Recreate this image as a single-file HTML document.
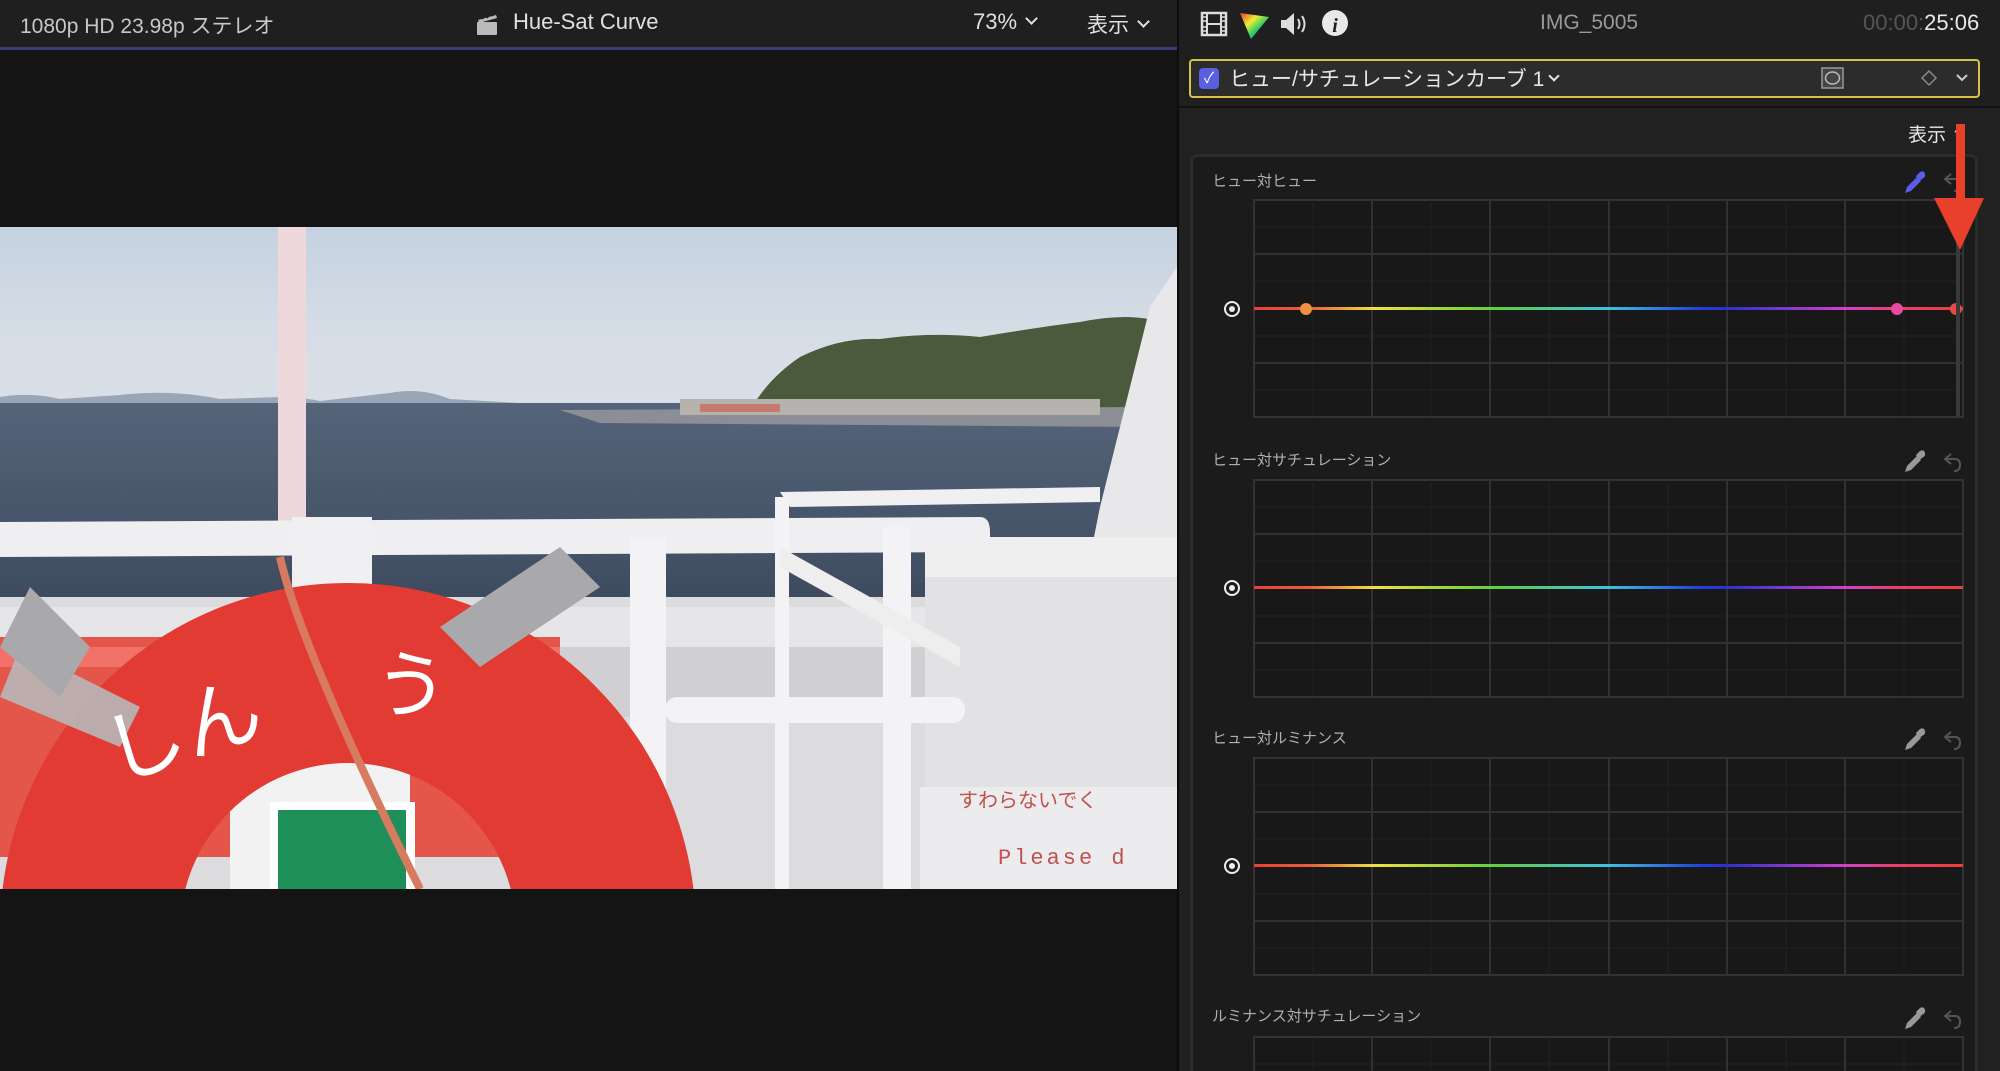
<!DOCTYPE html>
<html><head><meta charset="utf-8"><style>
*{margin:0;padding:0;box-sizing:border-box}
html,body{width:2000px;height:1071px;overflow:hidden}
body{background:#141414;position:relative;font-family:"Liberation Sans","Noto Sans CJK JP",sans-serif;color:#d0d0d0}
.abs{position:absolute}
.chev{display:inline-block;width:9px;height:9px;border-right:2px solid currentColor;border-bottom:2px solid currentColor;transform:rotate(45deg);margin-left:10px;vertical-align:6px}
</style></head><body>
<div class="abs" style="left:0;top:0;width:1178px;height:48px;background:#1f1f1f"></div>
<div class="abs" style="left:0;top:47px;width:1178px;height:3px;background:#3a3c78"></div>
<div class="abs" style="left:20px;top:10px;font-size:21px;color:#c8c8c8">1080p HD 23.98p ステレオ</div>
<svg class="abs" style="left:476px;top:12px" width="22" height="24" viewBox="0 0 22 24"><rect x="1" y="10" width="20" height="13" rx="1" fill="#bbb"/><path d="M2 8 L20 3 L21 6 L3 11Z" fill="#bbb"/><path d="M6 7 l2-4 M11 6 l2-4 M16 4 l2-3" stroke="#1f1f1f" stroke-width="2"/></svg>
<div class="abs" style="left:513px;top:9px;font-size:22px;color:#e0e0e0">Hue-Sat Curve</div>
<div class="abs" style="left:973px;top:9px;font-size:22px;color:#e0e0e0">73%<span class="chev"></span></div>
<div class="abs" style="left:1087px;top:9px;font-size:21px;color:#e0e0e0">表示<span class="chev"></span></div>

<svg class="abs" style="left:0;top:227px" width="1177" height="662" viewBox="0 0 1177 662">
<defs>
<linearGradient id="sky" x1="0" y1="0" x2="0" y2="1"><stop offset="0" stop-color="#c5d2e0"/><stop offset="0.6" stop-color="#d6dde6"/><stop offset="1" stop-color="#d9dfe6"/></linearGradient>
<linearGradient id="sea" x1="0" y1="0" x2="0" y2="1"><stop offset="0" stop-color="#55647a"/><stop offset="1" stop-color="#3d4a5e"/></linearGradient>
</defs>
<rect width="1177" height="180" fill="url(#sky)"/>
<path d="M0 170 Q30 165 60 172 L120 168 Q170 162 220 172 L280 170 Q300 170 320 174 L390 166 Q420 160 450 172 L520 176 L0 176Z" fill="#9aa6b6"/>
<rect y="176" width="1177" height="205" fill="url(#sea)"/>
<path d="M752 180 Q770 150 800 130 Q840 110 880 112 Q930 105 980 110 Q1040 100 1080 95 Q1130 85 1160 95 L1160 190 L752 190Z" fill="#4b5a3c"/>
<path d="M560 183 L1140 180 L1140 200 L600 196Z" fill="#8b8f95"/>
<rect x="680" y="172" width="420" height="16" fill="#b6b3ae"/>
<rect x="700" y="177" width="80" height="8" fill="#c57a6e"/>
<path d="M1100 280 L1150 80 L1177 40 L1177 330 L1090 330Z" fill="#e8e8ea"/>
<rect x="0" y="370" width="1177" height="292" fill="#dcdcde"/>
<rect x="0" y="380" width="1177" height="40" fill="#e6e6e8"/>
<rect x="0" y="420" width="1177" height="70" fill="#d0d0d2"/>
<rect x="0" y="410" width="560" height="220" fill="#e4564a"/>
<rect x="0" y="420" width="560" height="20" fill="#f07268"/>
<rect x="925" y="320" width="252" height="342" fill="#e2e2e4"/>
<rect x="925" y="310" width="252" height="40" fill="#efeff0"/>
<rect x="920" y="560" width="257" height="102" fill="#ececee"/>
<text x="958" y="580" font-size="20" fill="#c0504a" font-family="Noto Sans CJK JP,sans-serif">すわらないでく</text>
<text x="998" y="637" font-size="22" fill="#c0504a" letter-spacing="3" font-family="Liberation Mono,monospace">Please d</text>
<rect x="278" y="0" width="28" height="300" fill="#efd8dc"/>
<path d="M0 295 L980 290 Q990 290 990 305 L990 313 Q990 325 978 325 L0 330Z" fill="#efeff1"/>
<rect x="292" y="290" width="80" height="110" fill="#f0f0f2"/>
<path d="M780 265 L1100 260 L1100 275 L790 280Z" fill="#f0f0f2"/>
<rect x="630" y="310" width="36" height="352" fill="#f3f3f5"/>
<rect x="775" y="270" width="14" height="392" fill="#f3f3f5"/>
<rect x="883" y="300" width="28" height="362" fill="#f3f3f5"/>
<rect x="665" y="470" width="300" height="26" rx="12" fill="#f3f3f5"/>
<path d="M780 320 L960 420 L960 440 L780 340Z" fill="#eeeeef"/>
<rect x="230" y="400" width="180" height="262" fill="#f2f2f2"/>
<rect x="270" y="575" width="145" height="87" fill="#fff"/>
<rect x="278" y="583" width="128" height="79" fill="#1f8f5a"/>
<circle cx="348" cy="704" r="258" fill="none" stroke="#e23b34" stroke-width="180"/>
<path d="M20 420 L140 480 L120 520 L0 470Z" fill="#b8b8b8" opacity="0.9"/>
<path d="M30 360 L90 420 L60 470 L0 420Z" fill="#a9a9ab"/>
<path d="M440 400 L560 320 L600 360 L480 440Z" fill="#a9a9ab"/>
<path d="M280 330 Q300 420 420 662" stroke="#d77a60" stroke-width="8" fill="none"/>
<text x="115" y="555" font-size="80" fill="#fff" font-family="Noto Sans CJK JP,sans-serif" transform="rotate(-18 115 555)">しん</text>
<text x="370" y="480" font-size="75" fill="#fff" font-family="Noto Sans CJK JP,sans-serif" transform="rotate(8 370 480)">う</text>
</svg>

<div class="abs" style="left:1177px;top:0;width:2px;height:1071px;background:#0c0c0c"></div>
<div class="abs" style="left:1179px;top:0;width:821px;height:1071px;background:#212121"></div>
<div class="abs" style="left:1179px;top:0;width:821px;height:106px;background:#1f1f1f"></div>
<svg class="abs" style="left:1195px;top:8px" width="165" height="32" viewBox="0 0 165 32">
<rect x="7" y="5" width="24" height="22" fill="none" stroke="#ddd" stroke-width="2.5"/>
<path d="M12 5 V27 M26 5 V27 M12 16 H26" stroke="#ddd" stroke-width="2"/>
<path d="M7 9 h5 M7 13 h5 M7 19 h5 M7 23 h5 M26 9 h5 M26 13 h5 M26 19 h5 M26 23 h5" stroke="#ddd" stroke-width="1.5"/>
<defs><linearGradient id="tri" x1="0" y1="0" x2="1" y2="1"><stop offset="0" stop-color="#e33"/><stop offset="0.35" stop-color="#ee3"/><stop offset="0.6" stop-color="#3c6"/><stop offset="1" stop-color="#44e"/></linearGradient></defs>
<path d="M45 5 L74 9 L56 31Z" fill="url(#tri)"/>
<path d="M86 12 h5 l8 -7 v22 l-8 -7 h-5Z" fill="#ddd"/>
<path d="M103 11 q3 5 0 10 M107 8 q5 8 0 16" stroke="#ddd" stroke-width="2" fill="none"/>
<circle cx="140" cy="15" r="13" fill="#e8e8e8"/>
<text x="140" y="24" font-size="20" font-style="italic" font-weight="bold" text-anchor="middle" fill="#1f1f1f" font-family="Liberation Serif,serif">i</text>
</svg>
<div class="abs" style="left:1540px;top:11px;font-size:21px;color:#9a9a9a">IMG_5005</div>
<div class="abs" style="left:1863px;top:10px;font-size:22px;color:#e8e8e8"><span style="color:#555">00:00:</span>25:06</div>
<div class="abs" style="left:1189px;top:59px;width:791px;height:39px;background:#2c2c2c;border:2px solid #d8c14a;border-radius:4px"></div>
<div class="abs" style="left:1199px;top:68px;width:20px;height:21px;background:#5a5ee0;border-radius:4px;color:#fff;font-size:15px;text-align:center;line-height:21px">✓</div>
<div class="abs" style="left:1229px;top:63px;font-size:21px;color:#e6e6e6">ヒュー/サチュレーションカーブ 1<span class="chev" style="margin-left:6px;width:8px;height:8px"></span></div>
<svg class="abs" style="left:1820px;top:66px" width="150" height="25" viewBox="0 0 150 25">
<rect x="2" y="2" width="21" height="20" fill="#444" stroke="#999" stroke-width="1.5"/><ellipse cx="12.5" cy="12" rx="7" ry="6" fill="none" stroke="#bbb" stroke-width="1.5"/>
<path d="M109 5 L116 12 L109 19 L102 12Z" fill="none" stroke="#888" stroke-width="1.5"/>
<path d="M137 9 l5 5 l5 -5" fill="none" stroke="#ccc" stroke-width="2"/>
</svg>
<div class="abs" style="left:1179px;top:106px;width:821px;height:2px;background:#111"></div>
<div class="abs" style="left:1908px;top:120px;font-size:19px;color:#e6e6e6">表示<span class="chev" style="width:7px;height:7px"></span></div>
<div class="abs" style="left:1190px;top:154px;width:788px;height:917px;background:#1b1b1b;border:3px solid #2c2c2c;border-bottom:none;border-radius:8px 8px 0 0"></div>
<div class="abs" style="left:1212px;top:170px;font-size:15px;color:#b0b0b0">ヒュー対ヒュー</div>
<div class="abs" style="left:1212px;top:449px;font-size:15px;color:#b0b0b0">ヒュー対サチュレーション</div>
<div class="abs" style="left:1212px;top:727px;font-size:15px;color:#b0b0b0">ヒュー対ルミナンス</div>
<div class="abs" style="left:1212px;top:1005px;font-size:15px;color:#b0b0b0">ルミナンス対サチュレーション</div>
<svg class="abs" style="left:0;top:0;overflow:hidden" width="2000" height="1071" viewBox="0 0 2000 1071">
<defs>
<clipPath id="clp"><rect x="0" y="0" width="2000" height="1071"/></clipPath>
<linearGradient id="hue" x1="1254" y1="0" x2="1963" y2="0" gradientUnits="userSpaceOnUse">
<stop offset="0" stop-color="#e8403a"/><stop offset="0.08" stop-color="#e8603a"/><stop offset="0.17" stop-color="#f0e040"/><stop offset="0.34" stop-color="#60d040"/><stop offset="0.5" stop-color="#40c0e0"/><stop offset="0.63" stop-color="#2040e0"/><stop offset="0.67" stop-color="#3030d0"/><stop offset="0.83" stop-color="#d040d0"/><stop offset="0.9" stop-color="#e84070"/><stop offset="1" stop-color="#e8403a"/></linearGradient>
<g id="grid">
<rect x="1254" y="0" width="709" height="217" fill="#181818" stroke="#333" stroke-width="2"/>
<path d="M1313 0V217M1431 0V217M1549 0V217M1668 0V217M1786 0V217M1904 0V217M1254 27H1963M1254 81H1963M1254 136H1963M1254 190H1963" stroke="#222" stroke-width="1"/>
<path d="M1372 0V217M1490 0V217M1609 0V217M1727 0V217M1845 0V217M1254 54H1963M1254 163H1963" stroke="#313131" stroke-width="2"/>
</g>
<g id="tgt"><circle cx="1232" cy="0" r="7" fill="none" stroke="#eee" stroke-width="2"/><circle cx="1232" cy="0" r="3" fill="#eee"/></g>
<g id="eye"><path d="M0 20 L2 14 L12 4 L16 8 L6 18Z" fill="#999"/><path d="M11 3 L15 -1 Q19 -3 20 1 Q21 4 17 6 L13 9" fill="#999"/></g>
<g id="undo"><path d="M10 2 L4 7 L10 12 M4 7 H14 Q19 7 19 13 Q19 19 13 19" fill="none" stroke="#555" stroke-width="2"/></g>
</defs>
<use href="#grid" y="200"/><use href="#grid" y="480"/><use href="#grid" y="758"/>
<g clip-path="url(#clp)"><use href="#grid" y="1037"/></g>
<rect x="1254" y="307" width="709" height="3" fill="url(#hue)"/>
<rect x="1254" y="586" width="709" height="3" fill="url(#hue)"/>
<rect x="1254" y="864" width="709" height="3" fill="url(#hue)"/>
<use href="#tgt" y="309"/><use href="#tgt" y="588"/><use href="#tgt" y="866"/>
<circle cx="1306" cy="309" r="6" fill="#f09040"/>
<circle cx="1897" cy="309" r="6" fill="#e84aa0"/>
<circle cx="1956" cy="309" r="6" fill="#e84a4a"/>
<rect x="1956" y="200" width="4" height="217" fill="#3a3a3a"/>
<g transform="translate(1905 173)"><path d="M0 20 L2 14 L12 4 L16 8 L6 18Z" fill="#5a5ee6"/><path d="M11 3 L15 -1 Q19 -3 20 1 Q21 4 17 6 L13 9" fill="#5a5ee6"/></g>
<use href="#undo" x="1941" y="172"/>
<use href="#eye" x="1905" y="452"/><use href="#undo" x="1941" y="452"/>
<use href="#eye" x="1905" y="730"/><use href="#undo" x="1941" y="730"/>
<use href="#eye" x="1905" y="1009"/><use href="#undo" x="1941" y="1009"/>
<rect x="1956" y="124" width="9" height="76" fill="#e8402a"/>
<path d="M1934 198 L1984 198 L1960 250Z" fill="#e8402a"/>
</svg>
</body></html>
